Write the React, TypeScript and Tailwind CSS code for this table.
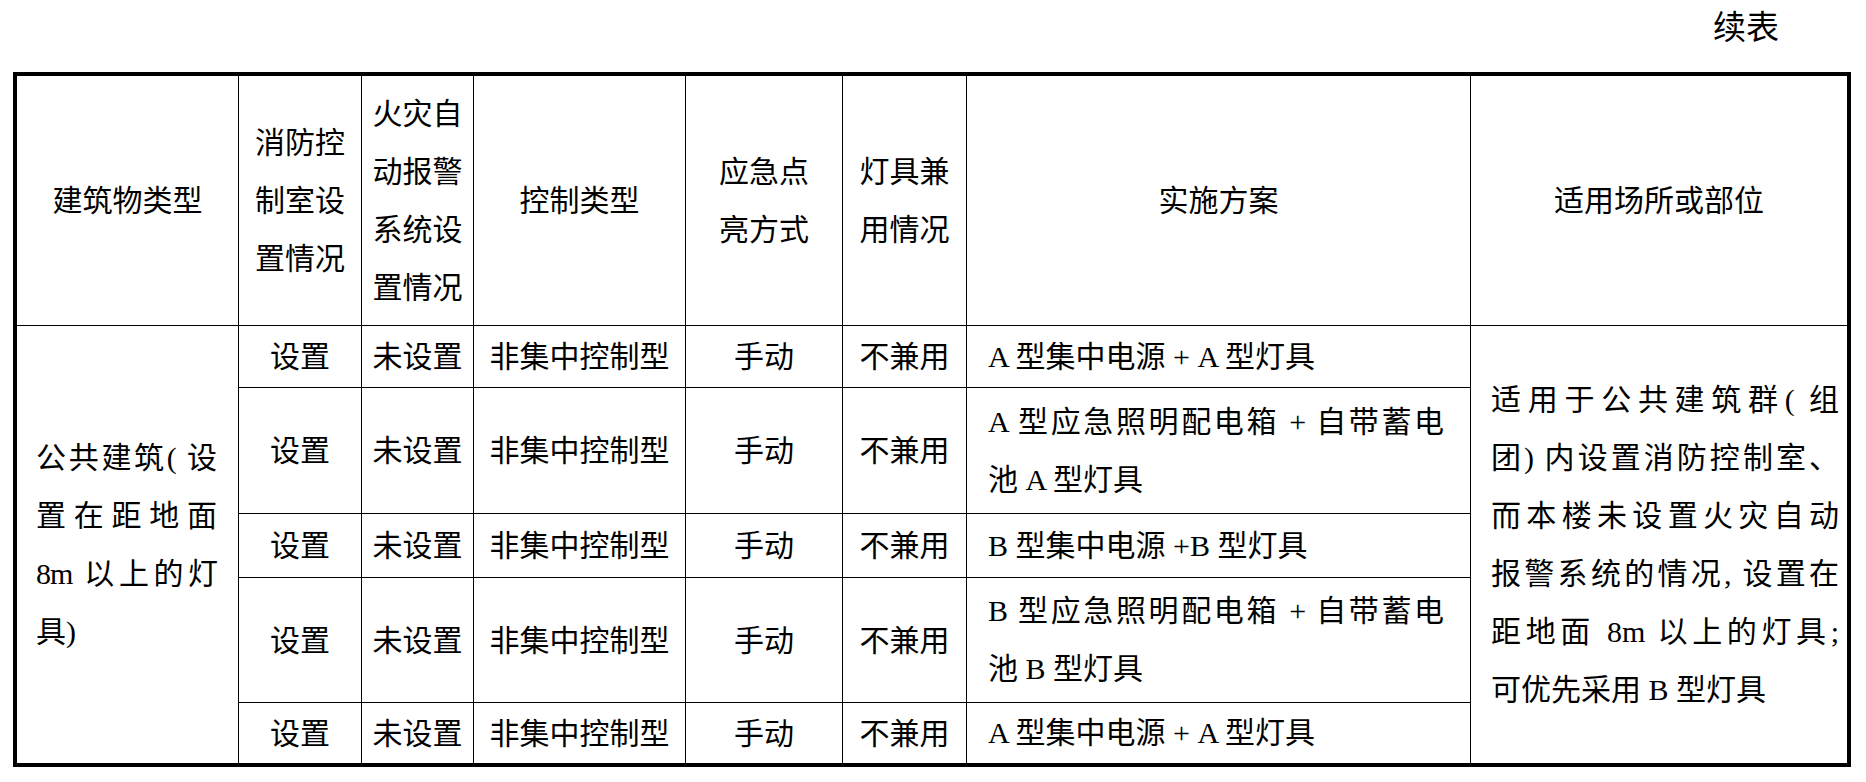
import React from "react";

const font = "font-['Liberation_Serif','Noto_Sans_CJK_SC',serif]";

type PlanRow = { plan: string[] };

const planRows: PlanRow[] = [
  { plan: ["A 型集中电源 + A 型灯具"] },
  { plan: ["A 型应急照明配电箱 + 自带蓄电", "池 A 型灯具"] },
  { plan: ["B 型集中电源 +B 型灯具"] },
  { plan: ["B 型应急照明配电箱 + 自带蓄电", "池 B 型灯具"] },
  { plan: ["A 型集中电源 + A 型灯具"] },
];

const headers: string[][] = [
  ["建筑物类型"],
  ["消防控", "制室设", "置情况"],
  ["火灾自", "动报警", "系统设", "置情况"],
  ["控制类型"],
  ["应急点", "亮方式"],
  ["灯具兼", "用情况"],
  ["实施方案"],
  ["适用场所或部位"],
];

const scope = [
  "适用于公共建筑群( 组",
  "团) 内设置消防控制室、",
  "而本楼未设置火灾自动",
  "报警系统的情况, 设置在",
  "距地面 8m 以上的灯具;",
];

const HeaderCell = ({ lines, last }: { lines: string[]; last: boolean }) => (
  <div
    className={
      last
        ? "flex flex-col items-center justify-center border-b border-black leading-[58px]"
        : "flex flex-col items-center justify-center border-r border-b border-black leading-[58px]"
    }
  >
    {lines.map((l) => (
      <div key={l} className="whitespace-nowrap">
        {l}
      </div>
    ))}
  </div>
);

const BodyCell = ({ children, bottom }: { children: React.ReactNode; bottom: boolean }) => (
  <div
    className={
      bottom
        ? "flex items-center justify-center border-r border-b border-black whitespace-nowrap"
        : "flex items-center justify-center border-r border-black whitespace-nowrap"
    }
  >
    {children}
  </div>
);

const PlanCell = ({ lines, bottom }: { lines: string[]; bottom: boolean }) => (
  <div
    className={
      bottom
        ? "flex items-center border-r border-b border-black pl-[21px] leading-[58px]"
        : "flex items-center border-r border-black pl-[21px] leading-[58px]"
    }
  >
    <div className="w-[456px]">
      {lines.length > 1 ? (
        <>
          <div className="whitespace-nowrap [text-align-last:justify]">{lines[0]}</div>
          <div className="whitespace-nowrap">{lines[1]}</div>
        </>
      ) : (
        <div className="whitespace-nowrap">{lines[0]}</div>
      )}
    </div>
  </div>
);

export default function App() {
  return (
    <div className={`w-[1866px] h-[782px] bg-white text-black text-[30px] ${font}`}>
      <div className="flex h-[72px] justify-end pr-[87px] pt-[12px] text-[33px] leading-[33px]">
        续表
      </div>

      <div className="ml-[13px] w-[1838px] border-4 border-black">
        <div className="grid grid-cols-[222px_123px_112px_212px_157px_124px_504px_376px] grid-rows-[250px_62px_126px_64px_125px_60px]">
          {headers.map((h, i) => (
            <HeaderCell key={i} lines={h} last={i === headers.length - 1} />
          ))}

          {/* building type, spans all body rows */}
          <div className="row-span-5 flex items-center border-r border-black pl-[19px] leading-[58px]">
            <div className="w-[181px]">
              <div className="whitespace-nowrap [text-align-last:justify]">公共建筑( 设</div>
              <div className="whitespace-nowrap [text-align-last:justify]">置在距地面</div>
              <div className="whitespace-nowrap tracking-[-1px] [text-align-last:justify]">8m 以上的灯</div>
              <div className="whitespace-nowrap">具)</div>
            </div>
          </div>

          {planRows.map((r, i) => {
            const bottom = i < planRows.length - 1;
            return (
              <React.Fragment key={i}>
                <BodyCell bottom={bottom}>设置</BodyCell>
                <BodyCell bottom={bottom}>未设置</BodyCell>
                <BodyCell bottom={bottom}>非集中控制型</BodyCell>
                <BodyCell bottom={bottom}>手动</BodyCell>
                <BodyCell bottom={bottom}>不兼用</BodyCell>
                <PlanCell lines={r.plan} bottom={bottom} />
                {i === 0 && (
                  <div className="row-span-5 flex items-center pl-[20px] leading-[58px]">
                    <div className="w-[348px]">
                      {scope.map((l) => (
                        <div key={l} className="whitespace-nowrap [text-align-last:justify]">
                          {l}
                        </div>
                      ))}
                      <div className="whitespace-nowrap">可优先采用 B 型灯具</div>
                    </div>
                  </div>
                )}
              </React.Fragment>
            );
          })}
        </div>
      </div>
    </div>
  );
}
